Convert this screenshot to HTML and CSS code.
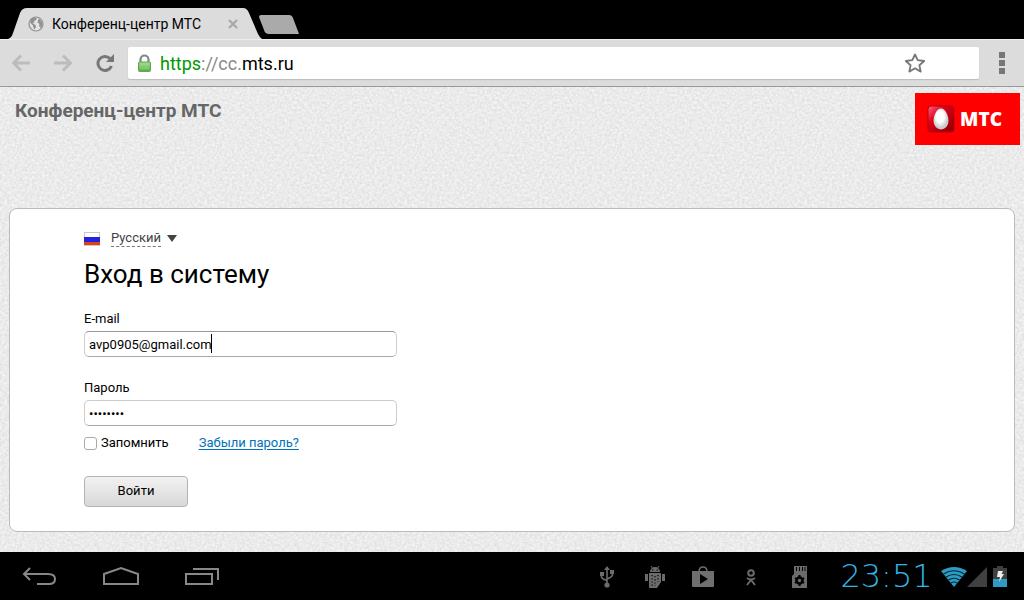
FILE: index.html
```html
<!DOCTYPE html>
<html lang="ru">
<head>
<meta charset="utf-8">
<title>Конференц-центр МТС</title>
<link rel="stylesheet" href="styles.css">
</head>
<body>
<div class="tabstrip">
  <div class="tab">
    <svg class="tab-shape" width="254" height="31" viewBox="0 0 254 31" aria-hidden="true"><path d="M0 31C3 30 4 28 5 25L12 5Q14 0 19 0H235Q239 0 241 5L250 26Q252 30 254 31Z" fill="#dcdcdc"/></svg>
    <svg class="tab-icon" width="16" height="16" viewBox="0 0 16 16" aria-hidden="true"><circle cx="8" cy="8" r="7" fill="#e4e4e4" stroke="#8f8f8f" stroke-width="1.200"/><path d="M3 3L6 1.500L9 2L8 4L6 5L6.500 6.500L4.500 7L6 8L8 9.500L8 11L6.500 13.500L5.500 12L5 9.500L2 6.500ZM11 2.500L14 6L14.500 9L12.500 12L11 10L11.500 8L9.500 6.500L10 4Z" fill="#929292"/></svg>
    <span class="tab-title">Конференц-центр МТС</span>
    <button class="plain tab-close" aria-label="Закрыть вкладку"><svg width="10" height="10" viewBox="0 0 10 10"><path d="M1 1L9 9M9 1L1 9" stroke="#a8a8a8" stroke-width="2.200"/></svg></button>
  </div>
  <button class="plain new-tab" aria-label="Новая вкладка"><svg width="40" height="19" viewBox="0 0 40 19"><path d="M2 0H30Q33 0 34 3L40 19H10Q6 19 5 15L0 2Q0 0 2 0Z" fill="#aaa"/></svg></button>
</div>
<div class="toolbar">
  <button class="plain" aria-label="Назад"><svg width="18" height="18" viewBox="0 0 18 18"><path d="M18 9H2M9 1.500L1.500 9L9 16.500" fill="none" stroke="#bcbcbc" stroke-width="3"/></svg></button>
  <button class="plain" aria-label="Вперёд"><svg width="18" height="18" viewBox="0 0 18 18"><path d="M0 9H16M9 1.500L16.500 9L9 16.500" fill="none" stroke="#bcbcbc" stroke-width="3"/></svg></button>
  <button class="plain" aria-label="Обновить"><svg width="18" height="18" viewBox="0 0 18 18"><path d="M14 4.500A7 7 0 1 0 15.500 12" fill="none" stroke="#777" stroke-width="3"/><path d="M18 0V8H10Z" fill="#777"/></svg></button>
  <div class="omnibox">
    <svg width="13" height="18" viewBox="0 0 13 18" aria-hidden="true"><defs><linearGradient id="lock" x2="0" y2="1"><stop stop-color="#a4dc8e"/><stop offset="1" stop-color="#55ae4c"/></linearGradient></defs><path d="M2.500 9V5.500A4 4 0 0 1 10.500 5.500V9" fill="none" stroke="#858585" stroke-width="2.200"/><rect x=".5" y="8" width="12" height="9.500" rx="1" fill="url(#lock)" stroke="#5aa950"/><path d="M2 11H11M2 14H11" stroke="#a9dda0" stroke-width=".7"/></svg>
    <span class="url"><span class="secure">https</span><span class="muted">://cc.</span>mts.ru</span>
    <button class="plain star" aria-label="В закладки"><svg width="22" height="20" viewBox="0 0 22 20"><path d="M11 1.500L13.700 7.200L20.200 8L15.400 12.200L16.700 18.600L11 15.300L5.300 18.600L6.600 12.200L1.800 8L8.300 7.200Z" fill="none" stroke="#777" stroke-width="1.800" stroke-linejoin="round"/></svg></button>
  </div>
  <button class="plain menu" aria-label="Меню"><svg width="6" height="22" viewBox="0 0 6 22"><path d="M0 0H6V6H0ZM0 8H6V14H0ZM0 16H6V22H0Z" fill="#777"/></svg></button>
</div>
<main class="page">
  <header class="page-head">
    <h1 class="site-name">Конференц-центр МТС</h1>
    <div class="brand">
      <svg width="28" height="28" viewBox="0 0 28 28" aria-hidden="true"><defs><linearGradient id="sq" x2="1" y2="1"><stop stop-color="#ff668d"/><stop offset=".35" stop-color="#e00016"/><stop offset="1" stop-color="#850004"/></linearGradient><radialGradient id="egg" cx=".45" cy=".4"><stop offset=".5" stop-color="#fff"/><stop offset="1" stop-color="#ccc"/></radialGradient></defs><rect x="1" y="1" width="26" height="26" rx="3" fill="url(#sq)" stroke="#b40010"/><path d="M14 3.500C18 3.500 21.500 10 21.500 16A7.500 8.500 0 0 1 6.500 16C6.500 10 10 3.500 14 3.500Z" fill="url(#egg)"/></svg>
      <span>МТС</span>
    </div>
  </header>
  <section class="card">
    <button class="plain language">
      <svg width="16" height="14" viewBox="0 0 16 14" aria-hidden="true"><rect width="16" height="14" fill="#c8c8c8"/><rect x="1" y="1" width="14" height="4" fill="#fff"/><rect y="5" width="16" height="5" fill="#2222df"/><rect y="10" width="16" height="3" fill="#db431c"/></svg>
      <span class="language-name">Русский</span>
      <svg width="10" height="7" viewBox="0 0 10 7" aria-hidden="true"><path d="M0 0H10L5 7Z" fill="#444"/></svg>
    </button>
    <h2 class="title">Вход в систему</h2>
    <form class="login">
      <label for="email">E-mail</label>
      <div class="field"><input id="email" class="text active" type="text" value="avp0905@gmail.com"><span class="caret"></span></div>
      <label class="pass-label" for="pass">Пароль</label>
      <div class="field"><input id="pass" class="text" type="password" value="password"></div>
      <div class="options">
        <input class="check" type="checkbox" id="remember"><label for="remember">Запомнить</label>
        <a class="forgot" href="#">Забыли пароль?</a>
      </div>
      <button class="submit" type="button">Войти</button>
    </form>
  </section>
</main>
<footer class="system">
  <div class="keys">
    <button class="plain" aria-label="Назад"><svg width="36" height="20" viewBox="0 0 36 20"><path d="M8 2L2 8L8 14M2 8H26Q33 8 33 13Q33 18 27 18H15" fill="none" stroke="#888" stroke-width="2"/></svg></button>
    <button class="plain" aria-label="Домой"><svg width="38" height="20" viewBox="0 0 38 20"><path d="M2 8L19 2L36 8V18H2Z" fill="none" stroke="#888" stroke-width="2"/></svg></button>
    <button class="plain" aria-label="Недавние"><svg width="36" height="20" viewBox="0 0 36 20"><path d="M2 8H28V18H2ZM9 3H34V14" fill="none" stroke="#888" stroke-width="2"/></svg></button>
  </div>
  <div class="notices">
    <svg width="16" height="22" viewBox="0 0 16 22" aria-hidden="true"><path d="M8 3V19M2.500 8V11Q3 13 8 14.500M13.500 6V9Q13 11 8 13" fill="none" stroke="#6b6b6b" stroke-width="1.600"/><path d="M8 0L11 4H5ZM1 6H5V10H1ZM11 4H15V8H11Z" fill="#6b6b6b"/><circle cx="8" cy="19" r="2.600" fill="#6b6b6b"/></svg>
    <svg width="20" height="23" viewBox="0 0 20 23" aria-hidden="true"><path d="M5 6A5 5 0 0 1 15 6ZM4 7H16V16L12 22H4ZM0 8H3V15H0ZM17 8H20V15H17Z" fill="#6b6b6b"/><path d="M6 0L8 3M14 0L12 3" stroke="#6b6b6b"/><path d="M7 4H8.500M11.500 4H13" stroke="#000"/><path d="M7 9V20M10 10V20M13 9V16" stroke="#000" stroke-width="1.200" stroke-dasharray="1.200 2"/></svg>
    <svg width="22" height="22" viewBox="0 0 22 22" aria-hidden="true"><path d="M7 6Q7 1 11 1T15 6" fill="none" stroke="#6b6b6b" stroke-width="1.500"/><path d="M0 5H22V20Q22 21 21 21H1Q0 21 0 20Z" fill="#6f6f6f"/><path d="M8 8L16 13L8 18Z" fill="#000"/></svg>
    <svg width="10" height="17" viewBox="0 0 10 17" aria-hidden="true"><circle cx="5" cy="4" r="2.800" fill="none" stroke="#6b6b6b" stroke-width="2"/><path d="M1 9Q5 12 9 9M1 16L5 11L9 16" fill="none" stroke="#6b6b6b" stroke-width="2"/></svg>
    <svg width="15" height="22" viewBox="0 0 15 22" aria-hidden="true"><path d="M2 0H15V22H0V10L2 8Z" fill="#6b6b6b"/><path d="M4.500 1V5M7.500 1V5M10.500 1V5M13 1V5" stroke="#000"/><circle cx="7.500" cy="14.500" r="3" fill="none" stroke="#000" stroke-width="2.500"/><path d="M7.500 9V11M7.500 18V20M3 12L4.500 13M10.500 16L12 17M3 17L4.500 16M10.500 13L12 12" stroke="#000" stroke-width="2"/></svg>
  </div>
  <time class="clock">23:51</time>
  <div class="status">
    <svg width="26" height="20" viewBox="0 0 26 20" aria-hidden="true"><path d="M0 4Q13 -4 26 4L13 20Z" fill="#2d9bc4"/><path d="M2.500 7Q13 .5 23.500 7M5 10Q13 5 21 10M7.500 13Q13 9.500 18.500 13M10 16Q13 14 16 16" fill="none" stroke="#08242e" stroke-width="1.200"/></svg>
    <svg width="20" height="20" viewBox="0 0 20 20" aria-hidden="true"><path d="M20 0V20H0Z" fill="#404040"/></svg>
    <svg class="battery" width="14" height="21" viewBox="0 0 14 21" aria-hidden="true"><path d="M4 0H10V2H14V21H0V2H4Z" fill="#404040"/><path d="M0 13H14V21H0Z" fill="#2d9bc4"/><path d="M5 5H10L8.500 8H11L6 16L7 11H4Z" fill="#eee"/></svg>
  </div>
</footer>
</body>
</html>
```
FILE: styles.css
```css
* { box-sizing: border-box; }
body {
  margin: 0;
  min-height: 100vh;
  display: flex;
  flex-direction: column;
  background: #000;
  color: #000;
  font-family: Roboto, "Noto Sans", sans-serif;
  font-size: 13px;
}
svg { display: block; flex: none; }
.plain { border: 0; padding: 0; background: none; font: inherit; color: inherit; }

.tabstrip { display: flex; align-items: flex-start; padding: 8px 8px 0; background: #000; }
.tab { position: relative; width: 251px; height: 31px; display: flex; align-items: center; padding: 0 21px 0 20px; gap: 8px; font-size: 14px; }
.tab-shape { position: absolute; inset: 0 auto auto 0; }
.tab-icon, .tab-title, .tab-close { position: relative; }
.tab-title { flex: 1; white-space: nowrap; }
.new-tab { margin-top: 7px; }

.toolbar { display: flex; align-items: center; gap: 24px; height: 48px; padding: 0 19px 0 12px; background: #dcdcdc; border-top: 1px solid #eee; border-bottom: 1px solid #999; }
.omnibox { flex: 1; display: flex; align-items: center; gap: 9px; height: 32px; margin-left: -10px; padding: 0 53px 0 10px; background: #fff; border-radius: 2px; box-shadow: 0 1px 1px #bbb; }
.url { flex: 1; font-size: 18px; }
.secure { color: #090; }
.muted { color: #888; }
.menu { margin-left: -4px; }

.page {
  flex: 1;
  padding: 6px 9px 20px;
  background-color: #ebebeb;
  background-image: url("data:image/svg+xml,%3Csvg xmlns='http://www.w3.org/2000/svg' width='200' height='200'%3E%3Cfilter id='n' x='0' y='0' width='1' height='1' color-interpolation-filters='sRGB'%3E%3CfeTurbulence type='fractalNoise' baseFrequency='.4' numOctaves='3' stitchTiles='stitch'/%3E%3CfeColorMatrix values='.14 0 0 0 .85 .14 0 0 0 .85 .14 0 0 0 .85 0 0 0 0 1'/%3E%3C/filter%3E%3Crect width='200' height='200' filter='url(%23n)'/%3E%3C/svg%3E");
}
.page-head { display: flex; justify-content: space-between; align-items: flex-start; min-height: 115px; margin-right: -5px; padding-left: 6px; }
.site-name { margin: 6px 0 0; font-size: 19px; line-height: 24px; font-weight: 700; color: #666; }
.brand { display: flex; align-items: center; gap: 5px; height: 52px; padding: 0 18px 0 12px; background: #f00; color: #fff; font: 800 19px "Open Sans", sans-serif; }

.card { padding: 21px 74px 24px; background: #fff; border: 1px solid #bbb; border-radius: 8px; }
.language { display: flex; align-items: center; gap: 6px; line-height: 16px; color: #444; }
.language-name { margin-left: 5px; border-bottom: 1px dashed #777; }
.title { margin: 10px 0 20px; font-size: 26px; line-height: 34px; font-weight: 400; }
.login { width: 313px; max-width: 100%; line-height: 16px; }
.login label { display: block; }
.field { position: relative; margin-top: 4px; }
.text { display: block; width: 100%; height: 26px; padding: 0 4px; border: 1px solid #ccc; border-bottom-color: #aaa; border-radius: 5px; background: #fff; color: #000; font: inherit; outline: 0; }
.active { border-top-color: #999; }
.caret { position: absolute; top: 3px; left: 127px; width: 1px; height: 19px; background: #000; }
.login .pass-label { margin-top: 23px; }
.options { display: flex; align-items: center; margin-top: 9px; white-space: nowrap; }
.check { appearance: none; width: 13px; height: 13px; margin: 0 4px 0 0; border: 1px solid #aaa; border-radius: 3px; background: #fff; }
.forgot { margin-left: 30px; color: #0071bb; text-underline-offset: 2px; }
.submit { width: 104px; height: 31px; margin-top: 25px; padding: 0 0 2px; border: 1px solid #b4b4b4; border-radius: 4px; background: linear-gradient(#f2f2f2, #d8d8d8); color: #000; font: inherit; }

.system { display: flex; align-items: center; flex: none; height: 48px; padding: 0 17px 0 22px; background: #000; }
.keys { display: flex; gap: 44px; flex: 1; }
.notices { display: grid; grid-template-columns: repeat(5, 48px); place-items: center; margin-right: 9px; }
.notices svg { margin-top: 2px; }
.clock { width: 109px; color: #33b5e5; font: 200 32px/48px "DejaVu Sans", sans-serif; text-align: center; white-space: nowrap; }
.status { display: flex; align-items: flex-end; gap: 0; }
.battery { margin-left: 6px; }
```
